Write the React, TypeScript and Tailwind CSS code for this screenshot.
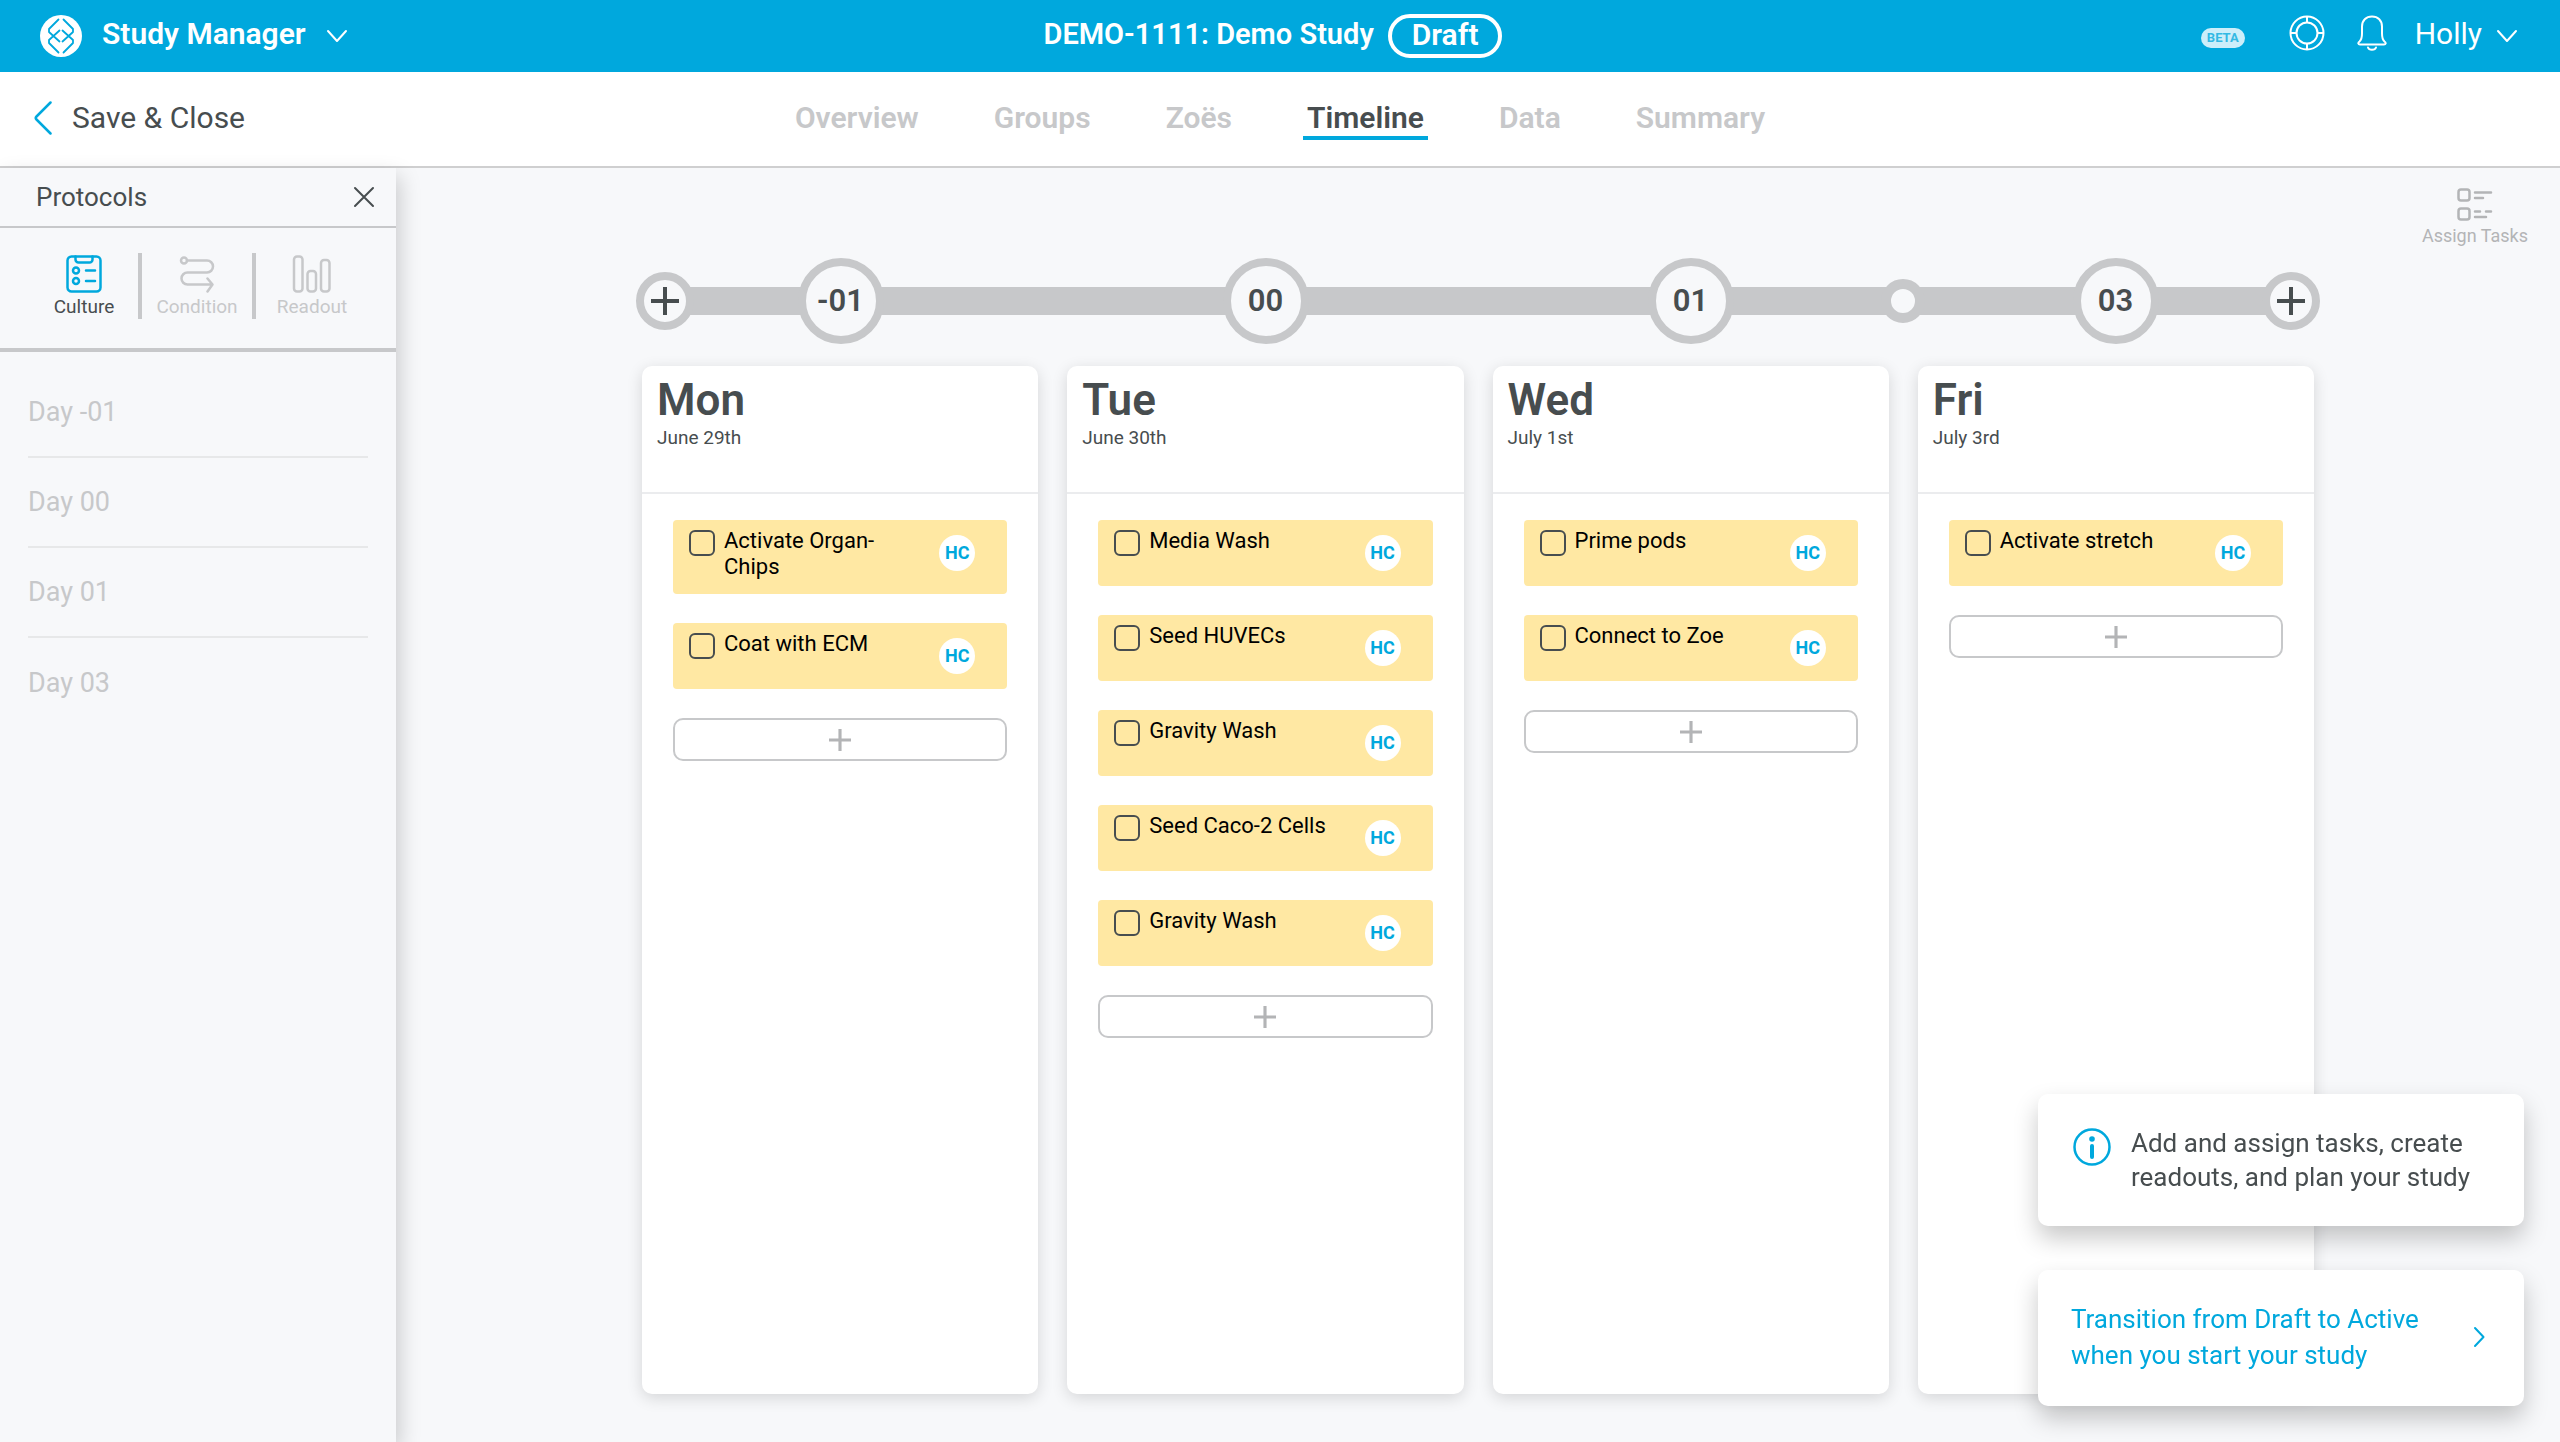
import React from "react";

type Task = { title: string };
type Day = { label: string; name: string; date: string; tasks: Task[] };

const days: Day[] = [
  { label: "-01", name: "Mon", date: "June 29th", tasks: [{ title: "Activate Organ-Chips" }, { title: "Coat with ECM" }] },
  {
    label: "00",
    name: "Tue",
    date: "June 30th",
    tasks: [
      { title: "Media Wash" },
      { title: "Seed HUVECs" },
      { title: "Gravity Wash" },
      { title: "Seed Caco-2 Cells" },
      { title: "Gravity Wash" },
    ],
  },
  { label: "01", name: "Wed", date: "July 1st", tasks: [{ title: "Prime pods" }, { title: "Connect to Zoe" }] },
  { label: "03", name: "Fri", date: "July 3rd", tasks: [{ title: "Activate stretch" }] },
];

const tabs = ["Overview", "Groups", "Zoës", "Timeline", "Data", "Summary"];

function ChevronDown() {
  return (
    <svg viewBox="0 0 22 14" className="h-[14px] w-[22px]" fill="none" stroke="currentColor" strokeWidth="2" strokeLinecap="round" strokeLinejoin="round">
      <path d="M2 2l9 10 9-10" />
    </svg>
  );
}

function Logo() {
  return (
    <svg viewBox="0 0 42 42" className="size-[42px]" fill="none">
      <circle cx="21" cy="21" r="21" fill="#fff" />
      <g stroke="#00a8dd" strokeWidth="1.8" strokeLinecap="round" strokeLinejoin="round">
        <path d="M18.5 4.5L9 14v3l10.500 9.500M18.500 37.500L9 28v-3l10.500-9.500" />
        <path d="M23.500 4.500L33 14v3L22.500 26.500M23.500 37.500L33 28v-3L22.500 15.500" />
      </g>
    </svg>
  );
}

function Plus({ size, stroke }: { size: number; stroke: number }) {
  return (
    <svg viewBox="0 0 28 28" width={size} height={size} fill="none" stroke="currentColor" strokeWidth={stroke}>
      <path d="M14 0v28M0 14h28" />
    </svg>
  );
}

function Header() {
  return (
    <header className="grid h-[72px] grid-cols-[1fr_auto_1fr] items-center bg-[#00a8dd] pr-[42px] pl-10 text-white">
      <button type="button" className="flex items-center gap-4 justify-self-start">
        <Logo />
        <span className="px-1 pb-1 text-[30px] leading-9 font-semibold">Study Manager</span>
        <ChevronDown />
      </button>
      <div className="flex items-center gap-[14px] pr-3">
        <h1 className="pb-1 text-[29px] leading-9 font-semibold">DEMO-1111: Demo Study</h1>
        <span className="flex h-11 items-center rounded-full border-4 border-white px-5 pb-[2px] text-[30px] leading-9 font-semibold">Draft</span>
      </div>
      <div className="flex items-center justify-self-end">
        <span className="mt-1 mr-11 rounded-full bg-[#cceefa] px-[6px] text-[13px] leading-5 font-bold text-[#33b9e4]">BETA</span>
        <button type="button" aria-label="Help" className="mr-8 pb-[6px]">
          <svg viewBox="0 0 36 36" className="size-9" fill="none" stroke="currentColor" strokeWidth="2">
            <circle cx="18" cy="18" r="16.500" />
            <circle cx="18" cy="18" r="10.500" />
            <path d="M18 1.500v6M18 28.500v6M1.500 18h6M28.500 18h6" />
          </svg>
        </button>
        <button type="button" aria-label="Notifications" className="mr-7 pb-[6px]">
          <svg viewBox="0 0 30 36" className="h-9 w-[30px]" fill="none" stroke="currentColor" strokeWidth="2" strokeLinecap="round" strokeLinejoin="round">
            <path d="M15 1.500c-6 0-10 4-10 10v7c0 5-.8 6.500-2.500 8C.5 28 1.300 29.500 3 29.500h24c1.700 0 2.500-1.500.5-3-1.700-1.500-2.500-3-2.500-8v-7c0-6-4-10-10-10z" />
            <path d="M11 32.500c1 3 7 3 8 0" />
          </svg>
        </button>
        <button type="button" className="flex items-center gap-[14px]">
          <span className="pb-1 text-[30px] leading-9">Holly</span>
          <ChevronDown />
        </button>
      </div>
    </header>
  );
}

function Nav() {
  return (
    <nav className="grid h-24 grid-cols-[1fr_auto_1fr] items-center border-b-2 border-[#cfcfd0] bg-white px-[34px] pb-[2px]">
      <a href="#close" className="flex items-center gap-5 justify-self-start text-[30px] leading-9">
        <svg viewBox="0 0 18 34" className="h-[34px] w-[18px]" fill="none" stroke="#00a8dd" strokeWidth="2.500" strokeLinecap="round" strokeLinejoin="round">
          <path d="M16.500 1.500L2.500 15.500q-1.500 1.500 0 3L16.500 32.500" />
        </svg>
        Save &amp; Close
      </a>
      <div className="flex items-center gap-[67px]">
        {tabs.map((t) =>
          t === "Timeline" ? (
            <a key={t} href="#timeline" aria-current="page" className="border-y-4 border-t-transparent border-b-[#00a8dd] px-1 text-[30px] leading-9 font-semibold">
              {t}
            </a>
          ) : (
            <a key={t} href={"#" + t.toLowerCase()} className="border-y-4 border-transparent px-1 text-[30px] leading-9 font-semibold text-[#c7c8ca]">
              {t}
            </a>
          ),
        )}
      </div>
    </nav>
  );
}

function Sidebar() {
  return (
    <aside className="relative z-10 w-[396px] shrink-0 bg-[#f7f8fa] shadow-[4px_8px_20px_rgba(0,0,0,0.18)]">
      <div className="flex h-[60px] items-center justify-between border-b-2 border-[#c7c8ca] pr-[21px] pl-9">
        <h2 className="text-[26px] leading-8">Protocols</h2>
        <button type="button" aria-label="Close protocols">
          <svg viewBox="0 0 22 22" className="size-[22px]" fill="none" stroke="currentColor" strokeWidth="2" strokeLinecap="round">
            <path d="M2 2l18 18M20 2L2 20" />
          </svg>
        </button>
      </div>
      <div className="flex h-[124px] items-center border-b-4 border-[#c7c8ca] pr-7 pb-1 pl-[30px] text-[19px] leading-6">
        <button type="button" className="flex h-[66px] w-[108px] flex-col items-center justify-between">
          <svg viewBox="0 0 36 38" className="mt-[2px] h-[38px] w-9" fill="none" stroke="#00a8dd" strokeWidth="2.500" strokeLinecap="round" strokeLinejoin="round">
            <rect x="1.500" y="1.500" width="33" height="35" rx="4" />
            <path d="M9.500 1.500v3a3 3 0 003 3h11a3 3 0 003-3v-3M20 15.500h9M20 26h9" />
            <circle cx="10" cy="15.500" r="3" />
            <circle cx="10" cy="26" r="3" />
          </svg>
          <span>Culture</span>
        </button>
        <button type="button" className="flex h-[66px] w-[118px] flex-col items-center justify-between border-x-4 border-[#c7c8ca] text-[#c7c8ca]">
          <svg viewBox="0 0 36 38" className="mt-[2px] h-[38px] w-9" fill="none" stroke="currentColor" strokeWidth="2.500" strokeLinecap="round" strokeLinejoin="round">
            <circle cx="5" cy="5.500" r="3" />
            <path d="M8 5.500h20a6 6 0 010 12H8.500a6 6 0 000 12H33M28.500 23.500l5 6-5 7" />
          </svg>
          <span>Condition</span>
        </button>
        <button type="button" className="flex h-[66px] w-[112px] flex-col items-center justify-between text-[#c7c8ca]">
          <svg viewBox="0 0 40 38" className="mt-[2px] h-[38px] w-10" fill="none" stroke="currentColor" strokeWidth="2.500">
            <rect x="2" y="1.500" width="8.500" height="35" rx="3" />
            <rect x="15.500" y="16" width="8.500" height="20.500" rx="3" />
            <rect x="29" y="5" width="8.500" height="31.500" rx="3" />
          </svg>
          <span>Readout</span>
        </button>
      </div>
      <ul className="px-7 pt-4">
        {days.map((d) => (
          <li key={d.label} className="flex h-[90px] items-center border-b-2 border-[#e7e8e9] text-[27px] leading-8 text-[#c7c8ca] last:border-0">
            Day {d.label}
          </li>
        ))}
      </ul>
    </aside>
  );
}

function TimelineTrack() {
  return (
    <div className="-mx-[14px] grid grid-cols-4">
      {days.map((d, i) => (
        <div key={d.label} className="flex h-[86px] items-center">
          <div className="flex flex-1 items-center">
            {i === 0 && (
              <button type="button" aria-label="Add day before" className="relative z-10 ml-2 flex size-[58px] shrink-0 items-center justify-center rounded-full border-8 border-[#c7c8ca] bg-[#f7f8fa]">
                <Plus size={28} stroke={4} />
              </button>
            )}
            {i === 3 && (
              <button type="button" aria-label="Show skipped day" className="relative z-10 -ml-[22px] size-11 shrink-0 rounded-full border-10 border-[#c7c8ca] bg-[#f7f8fa]" />
            )}
            <div className="-mx-2 h-7 flex-1 bg-[#c7c8ca]" />
          </div>
          <div className="relative z-10 flex size-[86px] shrink-0 items-center justify-center rounded-full border-8 border-[#c7c8ca] bg-[#f7f8fa] text-[31px] leading-9 font-semibold">
            {d.label}
          </div>
          <div className="flex flex-1 items-center">
            <div className="-mx-2 h-7 flex-1 bg-[#c7c8ca]" />
            {i === 3 && (
              <button type="button" aria-label="Add day after" className="relative z-10 mr-2 flex size-[58px] shrink-0 items-center justify-center rounded-full border-8 border-[#c7c8ca] bg-[#f7f8fa]">
                <Plus size={28} stroke={4} />
              </button>
            )}
          </div>
        </div>
      ))}
    </div>
  );
}

function TaskCard({ title }: Task) {
  return (
    <li className="flex min-h-[66px] items-start rounded-[4px] bg-[#ffe8a3] pr-8 pl-4">
      <label className="flex flex-1 items-start gap-[9px] pt-2 pb-[14px] text-[22px] leading-[26px] text-black">
        <input type="checkbox" className="mt-[2px] size-[26px] shrink-0 appearance-none rounded-[6px] border-2 border-[#474d4f]" />
        <span className="max-w-[180px] flex-1">{title}</span>
      </label>
      <span className="mt-[15px] flex size-9 shrink-0 items-center justify-center rounded-full bg-white text-[18px] leading-6 font-bold text-[#00a8dd]">HC</span>
    </li>
  );
}

function DayColumn({ day }: { day: Day }) {
  return (
    <section className="flex flex-col rounded-[10px] bg-white shadow-[0_4px_16px_rgba(0,0,0,0.14)]">
      <div className="h-32 border-b-2 border-[#ebecee] px-[15px] pt-2 text-[#474d4f]">
        <h3 className="text-[44px] leading-[52px] font-semibold">{day.name}</h3>
        <p className="text-[19px] leading-6">{day.date}</p>
      </div>
      <ul className="flex flex-col gap-[29px] px-[31px] pt-[26px]">
        {day.tasks.map((t, i) => (
          <TaskCard key={i} title={t.title} />
        ))}
        <li>
          <button type="button" aria-label={"Add task on " + day.name} className="flex h-[43px] w-full items-center justify-center rounded-[10px] border-2 border-[#c7c8ca] text-[#b3b4b6]">
            <Plus size={22} stroke={4} />
          </button>
        </li>
      </ul>
    </section>
  );
}

export default function App() {
  return (
    <div className="flex min-h-screen flex-col bg-[#f7f8fa] font-['Roboto',sans-serif] text-[#474d4f]">
      <Header />
      <Nav />
      <div className="flex flex-1">
        <Sidebar />
        <main className="relative flex flex-1 flex-col items-center px-10 pt-[90px] pb-12">
          <button type="button" className="absolute top-5 right-8 flex flex-col items-center gap-[2px] text-[18px] leading-6 text-[#b3b4b6]">
            <svg viewBox="0 0 36 34" className="h-[34px] w-9" fill="none" stroke="currentColor" strokeWidth="2.500" strokeLinecap="round">
              <rect x="1.500" y="1.500" width="11" height="11" rx="2.500" />
              <rect x="1.500" y="20.500" width="11" height="11" rx="2.500" />
              <path d="M18 4.500h16M18 10h8M18 23.500h5M29 23.500h5M18 29h11" />
            </svg>
            Assign Tasks
          </button>
          <div className="flex w-full max-w-[1672px] flex-1 flex-col gap-[22px]">
            <TimelineTrack />
            <div className="grid flex-1 grid-cols-4 gap-[29px]">
              {days.map((d) => (
                <DayColumn key={d.label} day={d} />
              ))}
            </div>
          </div>
        </main>
      </div>
      <div className="fixed right-9 bottom-9 z-20 flex w-[486px] flex-col gap-11">
        <div role="status" className="flex h-[132px] items-start gap-5 rounded-[10px] bg-white pt-8 pl-[35px] shadow-[0_12px_24px_rgba(0,0,0,0.22)]">
          <svg viewBox="0 0 38 38" className="mt-[2px] size-[38px] shrink-0" fill="none" stroke="#00a8dd" strokeWidth="2.500" strokeLinecap="round">
            <circle cx="19" cy="19" r="17.500" />
            <path d="M19 18v11" strokeWidth="4" />
            <circle cx="19" cy="11" r="2.800" fill="#00a8dd" stroke="none" />
          </svg>
          <p className="max-w-[360px] text-[26px] leading-[34px]">Add and assign tasks, create readouts, and plan your study</p>
        </div>
        <button type="button" className="flex h-[136px] items-center justify-between rounded-[10px] bg-white pr-[38px] pb-[2px] pl-[33px] text-left text-[#00a8dd] shadow-[0_12px_24px_rgba(0,0,0,0.22)]">
          <span className="max-w-[360px] text-[26px] leading-9">Transition from Draft to Active when you start your study</span>
          <svg viewBox="0 0 14 22" className="h-[22px] w-[14px]" fill="none" stroke="currentColor" strokeWidth="2" strokeLinecap="round" strokeLinejoin="round">
            <path d="M3 2l8.500 9L3 20" />
          </svg>
        </button>
      </div>
    </div>
  );
}
